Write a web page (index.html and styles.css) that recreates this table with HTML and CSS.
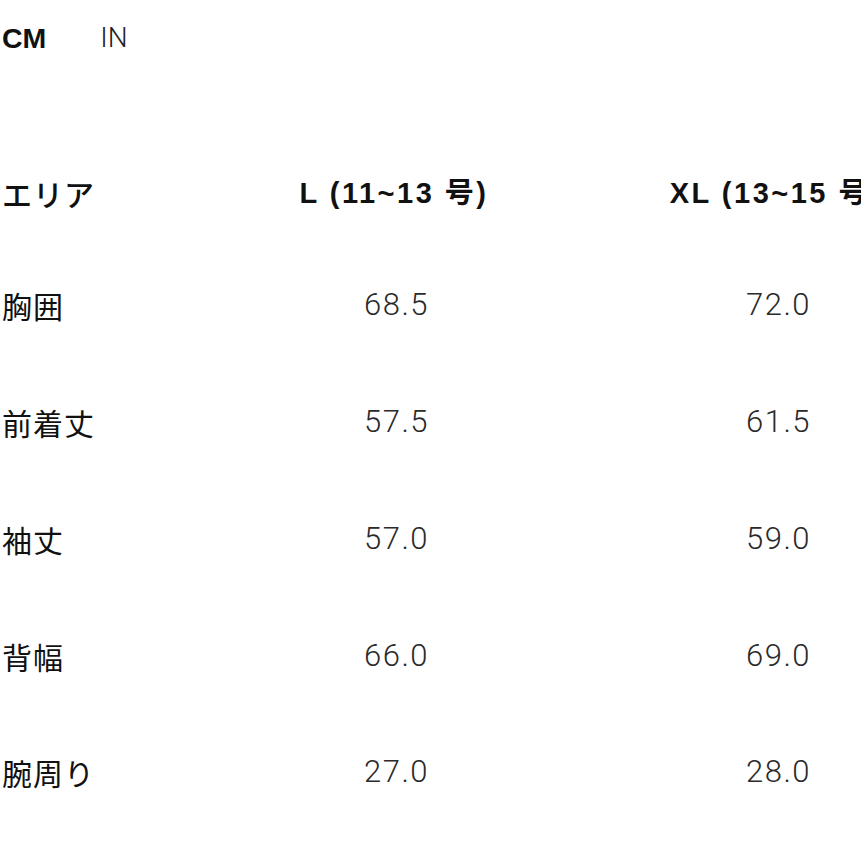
FILE: index.html
```html
<!DOCTYPE html>
<html lang="ja">
<head>
<meta charset="utf-8">
<title>サイズ表</title>
<link rel="stylesheet" href="styles.css">
</head>
<body>
<div class="page">
  <div class="units">
    <span class="unit unit-active">CM</span>
    <span class="unit">IN</span>
  </div>
  <div class="size-table">
    <div class="cell head label">エリア</div>
    <div class="cell head num">L (11~13 号)</div>
    <div class="cell head num">XL (13~15 号)</div>

    <div class="cell label">胸囲</div>
    <div class="cell num val">68.5</div>
    <div class="cell num val">72.0</div>

    <div class="cell label">前着丈</div>
    <div class="cell num val">57.5</div>
    <div class="cell num val">61.5</div>

    <div class="cell label">袖丈</div>
    <div class="cell num val">57.0</div>
    <div class="cell num val">59.0</div>

    <div class="cell label">背幅</div>
    <div class="cell num val">66.0</div>
    <div class="cell num val">69.0</div>

    <div class="cell label">腕周り</div>
    <div class="cell num val">27.0</div>
    <div class="cell num val">28.0</div>
  </div>
</div>
</body>
</html>
```

FILE: styles.css
```css
html, body {
  margin: 0;
  padding: 0;
  background: #ffffff;
  overflow: hidden;
}

.page {
  width: 861px;
  height: 861px;
  padding-left: 2px;
  box-sizing: border-box;
  font-family: "Liberation Sans", "Noto Sans CJK JP", sans-serif;
  color: #111111;
}

.units {
  display: flex;
  align-items: center;
  gap: 54px;
  padding-top: 23px;
  height: 30px;
}

.unit {
  font-family: "Roboto", "Liberation Sans", sans-serif;
  font-weight: 300;
  font-size: 28px;
  line-height: 30px;
  color: #222222;
}

.unit-active {
  font-family: "Liberation Sans", sans-serif;
  font-weight: 700;
  font-size: 28.5px;
  color: #111111;
}

.size-table {
  margin-top: 85px;
  display: grid;
  grid-template-columns: 201px 382px 382px;
  grid-template-rows: 109px repeat(5, 116.75px);
  width: 965px;
}

.cell {
  display: flex;
  align-items: center;
  font-size: 30px;
  line-height: 34px;
  white-space: nowrap;
}

.label {
  font-family: "Noto Sans CJK JP", sans-serif;
  font-weight: 400;
  color: #111111;
  letter-spacing: 1px;
}

.num {
  justify-content: center;
}

.head {
  font-family: "Liberation Sans", "Noto Sans CJK JP", sans-serif;
  font-weight: 700;
  font-size: 29px;
  letter-spacing: 2.5px;
}

.head.label {
  font-family: "Noto Sans CJK JP", sans-serif;
  font-size: 30px;
  font-weight: 500;
  letter-spacing: 1px;
}

.val {
  font-family: "Roboto", "Liberation Sans", sans-serif;
  font-weight: 300;
  color: #2a2a2a;
  font-size: 31px;
  letter-spacing: 1.5px;
  padding-left: 5px;
}
```
